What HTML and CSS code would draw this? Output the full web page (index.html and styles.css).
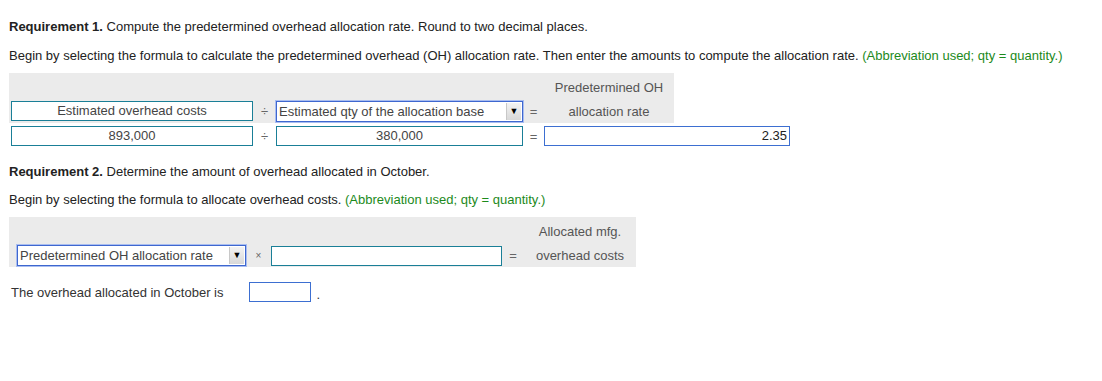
FILE: index.html
```html
<!DOCTYPE html>
<html lang="en">
<head>
    <meta charset="UTF-8">
    <title>Predetermined overhead</title>
    <link rel="stylesheet" href="styles.css">
</head>
<body>
    <p class="req first"><b>Requirement 1.</b> Compute the predetermined overhead allocation rate. Round to two decimal places.</p>
    <p class="req">Begin by selecting the formula to calculate the predetermined overhead (OH) allocation rate. Then enter the amounts to compute the allocation rate. <span class="hint">(Abbreviation used; qty = quantity.)</span></p>

    <!-- formula 1 -->
    <div class="formula f1">
        <div></div><div></div><div></div><div></div>
        <div class="label">Predetermined OH</div>
        <div class="box">Estimated overhead costs</div>
        <div class="op">÷</div>
        <div class="select"><span>Estimated qty of the allocation base</span><i>▼</i></div>
        <div class="op">=</div>
        <div class="label">allocation rate</div>
    </div>
    <div class="values">
        <div class="box">893,000</div>
        <div class="op">÷</div>
        <div class="box">380,000</div>
        <div class="op">=</div>
        <div class="box answer right">2.35</div>
    </div>

    <p class="req second"><b>Requirement 2.</b> Determine the amount of overhead allocated in October.</p>
    <p class="req">Begin by selecting the formula to allocate overhead costs. <span class="hint">(Abbreviation used; qty = quantity.)</span></p>

    <!-- formula 2 -->
    <div class="formula f2">
        <div></div><div></div><div></div><div></div>
        <div class="label">Allocated mfg.</div>
        <div class="select"><span>Predetermined OH allocation rate</span><i>▼</i></div>
        <div class="op small">×</div>
        <div class="box"></div>
        <div class="op">=</div>
        <div class="label">overhead costs</div>
    </div>

    <div class="result">
        The overhead allocated in October is
        <div class="box answer short"></div>
        <span class="dot">.</span>
    </div>
</body>
</html>
```

FILE: styles.css
```css
body {
    font-family: "Liberation Sans", Arial, sans-serif;
    font-size: 13px;
    color: #222;
    margin: 0;
    padding: 0 9px;
}

.req {
    margin: 0;
    line-height: 30px;
}

.req.first {
    margin-top: 12px;
    line-height: 29px;
}

.req.second {
    margin-top: 12px;
    line-height: 27px;
}

.hint {
    color: #1c8a1c;
}

.formula {
    display: grid;
    background-color: #ebebeb;
    color: #555;
    align-items: center;
    margin-top: 2px;
}

.f1 {
    width: 663px;
    padding: 0 0 2px 2px;
    grid-template-columns: 242px 23px 247px 21px 130px;
    grid-template-rows: 28px 20px;
}

.f2 {
    width: 619px;
    padding: 0 0 1px 8px;
    margin-top: 2px;
    grid-template-columns: 229px 25px 231px 22px 112px;
    grid-template-rows: 28px 21px;
}

.label {
    text-align: center;
}

.op {
    text-align: center;
    color: #666;
}

.op.small {
    font-size: 10px;
}

.box {
    box-sizing: border-box;
    height: 20px;
    border: 1px solid #1a7f97;
    background: #fff;
    color: #444;
    text-align: center;
    line-height: 18px;
}

.box.answer {
    border-color: #3d6fd1;
}

.box.right {
    text-align: right;
    padding-right: 2px;
    color: #222;
}

.select {
    box-sizing: border-box;
    height: 21px;
    display: flex;
    align-items: center;
    justify-content: space-between;
    border: 1px solid #3e67cf;
    box-shadow: 0 0 0 1px #a9bdf0;
    background: #fff;
    color: #444;
    padding: 0 1px 0 2px;
}

.select i {
    font-style: normal;
    font-size: 9px;
    color: #000;
    width: 14px;
    height: 17px;
    line-height: 17px;
    text-align: center;
    background: linear-gradient(#f3f3f3, #d8d8d8);
    border-left: 1px solid #c8c8c8;
}

.values {
    display: grid;
    grid-template-columns: 242px 23px 247px 21px 246px;
    align-items: center;
    margin: 3px 0 0 2px;
    height: 20px;
}

.result {
    display: flex;
    align-items: center;
    margin: 15px 0 0 2px;
    color: #333;
}

.box.short {
    width: 62px;
    margin-left: 26px;
}

.dot {
    margin-left: 5px;
    padding-top: 4px;
}
```
